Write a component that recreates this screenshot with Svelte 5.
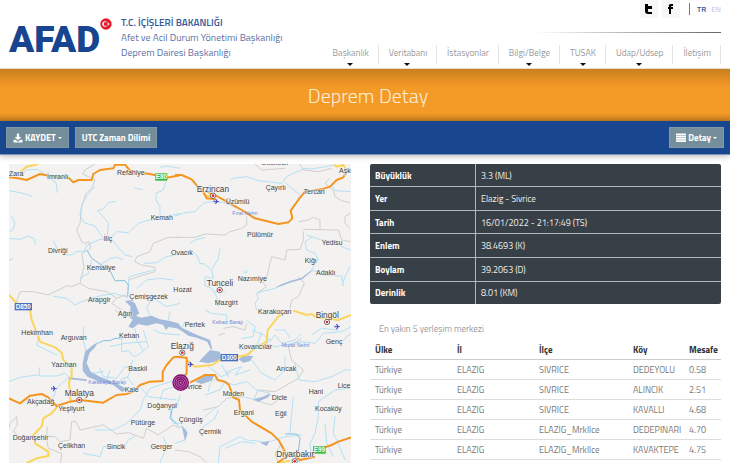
<script lang="ts">
	interface NavItem {
		label: string;
		menu: boolean;
	}

	const nav: NavItem[] = [
		{ label: 'Başkanlık', menu: true },
		{ label: 'Veritabanı', menu: true },
		{ label: 'İstasyonlar', menu: false },
		{ label: 'Bilgi/Belge', menu: true },
		{ label: 'TUSAK', menu: true },
		{ label: 'Udap/Udsep', menu: true },
		{ label: 'İletişim', menu: false }
	];

	const details = [
		['Büyüklük', '3.3 (ML)'],
		['Yer', 'Elazig - Sivrice'],
		['Tarih', '16/01/2022 - 21:17:49 (TS)'],
		['Enlem', '38.4693 (K)'],
		['Boylam', '39.2063 (D)'],
		['Derinlik', '8.01 (KM)']
	];

	const places = [
		['Türkiye', 'ELAZIG', 'SIVRICE', 'DEDEYOLU', '0.58'],
		['Türkiye', 'ELAZIG', 'SIVRICE', 'ALINCIK', '2.51'],
		['Türkiye', 'ELAZIG', 'SIVRICE', 'KAVALLI', '4.68'],
		['Türkiye', 'ELAZIG', 'ELAZIG_MrkIlce', 'DEDEPINARI', '4.70'],
		['Türkiye', 'ELAZIG', 'ELAZIG_MrkIlce', 'KAVAKTEPE', '4.75']
	];

	// The map is drawn in tiles, each with its own origin
	const tiles = [
		{
			x: 0,
			y: 0,
			rivers:
				'M27 38L60 45 80 30 110 28 130 38 150 55 168 68 172 98M27 92L60 98 75 102 98 110M34 168L45 190 38 210 28 215M27 235L60 238 85 228 102 235 107 253M27 302L40 295M285 80L262 105 245 135 240 165 252 188 285 198 310 235 330 240M347 124L325 128 308 148 292 152 310 170 325 190 322 225 345 250 375 285 397 290M330 235L350 215 385 218 415 190 440 182 490 175 520 165 540 160M497 65L490 90 468 100 468 120 480 140 480 165M403 85L428 88M480 22L500 18 540 25M160 242L172 268 200 285 215 285 230 275 262 272M252 272L262 255 300 238 330 240M275 300L265 340 240 355M300 315L330 295 350 292 370 300M385 375L388 350 460 330M433 310L470 308 500 290 540 282M158 408L200 415 225 435 245 425 290 410 340 400 380 410M410 385L440 360 480 355 520 360M460 415L500 440 540 430',
			streams: 'M262 272L275 295 300 312 330 332 345 362 375 362 385 375 383 410',
			borders:
				'M285 12L255 30 248 42 265 50 285 60 275 85 258 100 245 140 240 190 230 210 245 245 255 250 268 245 272 265 245 280 252 320 240 370 215 380 200 377 180 388 145 405 100 395 60 395 50 425M240 370L265 385 320 395 350 415 375 405 382 415M540 232L505 232 490 238 460 250 450 275 410 290 405 305 425 315 465 322 465 335 430 345 385 360M350 415L335 430 365 450',
			yellow: 'M62 35L80 20 115 12M27 405L45 425 65 440 85 450',
			orange:
				'M27 52L55 55 80 60 120 42 150 48 208 55 220 67 235 60 275 60 280 42 300 30 340 25 345 14 375 14 390 32 420 38 450 42 500 53 540 46',
			lakes: ''
		},
		{
			x: 525,
			y: 0,
			rivers:
				'M0 168L30 158 60 155 85 130 105 125 150 128 200 150M165 60L175 55 215 50 250 62 320 70 335 50 355 40 390 25 410 27 480 15M330 68L375 105 352 150M470 75L480 92 527 95M45 250L60 240 90 232M45 268L65 285 75 310 88 312 110 330 130 295 135 265M110 330L115 355 90 350 90 378 110 385 125 410 130 440M202 335L215 338 215 328M245 450L240 430 250 415 245 400 260 395 300 385 330 370M410 330L420 310 430 300 420 280 395 270 390 245 410 232M395 225L440 240 480 245 500 260 527 270M410 330L450 345 500 348 505 378M500 375L515 340 525 320M120 395L150 393',
			streams: '',
			borders:
				'M375 12L385 30 430 35 470 25M465 55L450 70 475 90 480 110 500 122 525 128M525 205L510 190 510 170 525 160M0 232L60 232 90 222 150 225 165 215 200 205 215 195 215 170M370 185L400 180 415 172 435 180 435 210M385 215L385 240 375 268 335 270 330 300 290 290 285 310 275 350 265 370 275 380 245 400M385 208L490 210 500 240 527 245M370 350L388 370 370 410 350 420 345 445M240 12L260 30 330 25',
			yellow: 'M478 15L485 20 505 15 512 28M78 90L92 108 112 108',
			orange:
				'M0 45L20 45 50 58 70 82 85 95 95 115 120 118M95 95L125 108 150 122 200 150 240 175 310 192 340 187 352 175 347 152 370 120 390 95 440 88 465 80 485 60 505 52 512 40',
			lakes: 'M300 382L320 373 345 363 380 353 410 330 410 334 382 358 345 368 320 378Z'
		},
		{
			x: 0,
			y: 450,
			rivers:
				'M250 50L250 90 260 130M105 60L115 85 110 105 150 125 172 135M27 215L60 202 110 195 120 198 170 198 195 190 210 205M118 172L118 195M157 270L170 235 200 207M365 85L365 125 385 122 398 138 410 138 445 110 430 60M330 110L375 100 440 95M405 55L410 90 430 120M372 82L400 70M300 175L310 200 350 205 375 170 400 175M275 190L310 185M320 210L330 180M360 210L385 200 398 150M400 225L380 200M285 360L340 360 380 340 420 300 430 270 450 235 490 222 540 205M480 270L490 240 540 225M250 430L300 440 310 410 375 408 385 390 410 375M540 255L530 290 510 300 520 340 540 340M420 230L445 260 530 270M490 380L500 410 480 459M460 60L485 70 540 75',
			streams: 'M365 85L345 85 330 92 310 92 295 100M520 285L510 325 530 340',
			borders:
				'M27 355L30 340 50 320 52 345 40 362 62 390M142 350L140 378 165 380 180 395 210 390 215 335 228 335 240 360 310 345 350 372 385 368 430 385 440 355 475 375 520 345 540 355M140 390L145 415 185 430 182 459M345 0L370 20 378 5M62 390L100 380',
			yellow:
				'M90 0L95 30 115 80 120 95 165 112 185 128 190 150 215 172 215 200 207 215 212 275M172 290L155 310 130 325 125 350 97 378 105 400 145 425 145 438 110 445 80 459',
			orange:
				'M27 265L60 280 90 257 125 252 145 262 170 288 210 275 240 270 310 278 350 255 380 252 400 245 420 225 450 215 488 213 488 185 500 165 520 142 540 140',
			lakes:
				'M295 95L285 112 268 130 260 160 272 185 300 200 350 220 385 240 365 245 340 225 290 212 262 200 248 182 248 160 255 125 275 108ZM205 202L260 208 260 213 205 208Z'
		},
		{
			x: 525,
			y: 450,
			rivers:
				'M90 0L110 10 155 15 155 45M215 30L240 50 235 80 200 85M260 65L245 110 195 120M275 100L300 75 320 100 360 90 380 70M230 60L265 75 290 95M300 60L330 60 345 85M220 140L235 110 270 100 300 110 380 95 420 100 445 70 500 65M500 65L528 50M410 75L440 55 490 60M230 150L260 190 300 210 330 180 330 140M360 160L372 210 420 215 470 200 510 180 528 180M140 165L160 200 155 185 200 170 180 195 225 180M125 205L105 220 100 245M150 215L135 240 90 255M150 215L175 225 215 215 245 240 285 250M100 170L140 200 170 185M205 260L235 268 290 255M130 300L120 325 85 350 75 365M90 320L125 290M130 459L135 410 195 380 215 390 265 395M150 415L200 395 240 400M285 395L330 380 380 375M355 260L350 310 345 370M525 235L480 240 430 275 430 320 420 370 405 400 410 440M480 320L475 370 490 400 510 450M450 340L455 400 475 440M0 205L30 190M0 340L35 360 30 390 0 400M375 459L355 430',
			streams: 'M330 372L365 372 375 385 370 425 360 445',
			borders:
				'M380 85L340 110 350 150 385 180 370 205 300 245 250 240M85 300L130 290 155 265 205 260M145 55L175 50 210 60 215 40M528 70L505 90M0 420L40 425 75 440 95 459M250 240L235 270 290 285 320 260M310 459L300 430 320 400M130 75L150 70',
			yellow:
				'M35 150L60 170 110 165 135 150 215 135 240 115 275 95 278 60 310 20 330 8M355 2L395 15 410 12 425 22 490 30 528 15M310 459L345 452',
			orange:
				'M0 140L35 143 35 190 15 215M45 218L90 195 120 195 128 210 150 215 162 225 175 262 192 270 195 300 230 335 290 370 312 392 330 425M440 415L470 405 490 395 528 382M306 459L350 430 375 450 420 440',
			lakes:
				'M72 155L85 140 105 120 135 125 140 150 100 160ZM190 148L205 138 235 138 225 153 205 158ZM60 215L90 198 118 197 110 212 80 222ZM238 268L265 260 285 250 280 262 250 275ZM255 398L285 392 275 408ZM20 345L38 370 30 392 25 370Z'
		},
		{
			// Keban reservoir, which crosses the other tiles
			x: 330,
			y: 375,
			rivers: 'M120 92L110 70 122 45M175 106L180 80M215 130L225 110',
			streams: '',
			borders: '',
			yellow: '',
			orange: '',
			lakes:
				'M45 48L62 46 75 55 88 85 78 92 92 98 125 92 150 103 180 108 205 115 215 128 240 140 262 150 300 165 307 192 302 192 292 170 260 158 235 152 215 138 200 130 175 126 168 136 160 120 140 115 110 122 85 117 68 130 55 125 68 104 45 86 60 78 62 65Z'
		}
	];

	const towns: [string, number, number][] = [
		['Zara', 27, 48],
		['İmranlı', 141, 57],
		['Refahiye', 351, 46],
		['Kemah', 452, 179],
		['İliç', 311, 243],
		['Divriği', 144, 278],
		['Kemaliye', 260, 330],
		['Ovacık', 513, 286],
		['Arapgir', 264, 426],
		['Çemişgezek', 388, 418],
		['Hozat', 520, 397],
		['Otlukbeli', 783, 16],
		['Aşk', 1017, 38],
		['Çayırlı', 797, 90],
		['Tercan', 911, 101],
		['Üzümlü', 677, 131],
		['Pülümür', 741, 230],
		['Yedisu', 965, 254],
		['Kiğı', 914, 308],
		['Adaklı', 948, 344],
		['Nazımiye', 713, 364],
		['Mazgirt', 644, 436],
		['Ağın', 354, 469],
		['Hekimhan', 64, 524],
		['Arguvan', 182, 539],
		['Keban', 357, 535],
		['Yazıhan', 154, 621],
		['Baskil', 385, 632],
		['Kale', 374, 696],
		['Akçadağ', 81, 731],
		['Yeşilyurt', 175, 752],
		['Doğanyol', 442, 745],
		['Pütürge', 392, 796],
		['Doğanşehir', 38, 841],
		['Çelikhan', 174, 865],
		['Sincik', 320, 867],
		['Gerger', 452, 867],
		['Karakoçan', 774, 463],
		['Pertek', 554, 501],
		['Kovancılar', 717, 567],
		['Genç', 977, 553],
		['Arıcak', 829, 634],
		['Sivrice', 543, 687],
		['Lice', 1013, 683],
		['Hani', 926, 701],
		['Maden', 668, 709],
		['Dicle', 815, 719],
		['Kocaköy', 945, 754],
		['Ergani', 701, 764],
		['Eğil', 825, 767],
		['Çüngüş', 536, 787],
		['Çermik', 597, 822]
	];

	const cities: [string, number, number, number, number][] = [
		['Erzincan', 590, 96, 639, 107],
		['Tunceli', 620, 379, 659, 390],
		['Malatya', 194, 708, 238, 720],
		['Elazığ', 512, 566, 547, 578],
		['Bingöl', 947, 474, 981, 486],
		['Diyarbakır', 829, 892, 884, 904]
	];

	const waters: [string, number, number][] = [
		['Fırat Nehri', 697, 165],
		['Karakaya Barajı', 265, 671],
		['Keban Barajı', 637, 491],
		['Murat Nehri', 845, 561]
	];

	const shields: [string, number, number, number, string][] = [
		['E80', 466, 40, 36, '#38b838'],
		['D850', 44, 429, 52, '#4e6fc0'],
		['D300', 662, 582, 52, '#4e6fc0'],
		['E99', 939, 859, 38, '#38b838']
	];

	const airports = [
		[649, 124],
		[162, 686],
		[572, 613],
		[1012, 500]
	];
</script>

<header class="top">
	<a class="brand" href="#home">
		<span class="logo">
			AFAD
			<svg class="flag" viewBox="0 0 36 36" aria-hidden="true">
				<circle cx="18" cy="18" r="17" fill="#e51b2c" />
				<circle cx="15" cy="18" r="8" fill="#fff" />
				<circle cx="17" cy="18" r="6" fill="#e51b2c" />
				<path d="M20 18l4-1 2-4 1 4 4 1-4 1-1 4-2-4z" fill="#fff" />
			</svg>
		</span>
		<span class="ministry">
			<strong>T.C. İÇİŞLERİ BAKANLIĞI</strong>
			<span>Afet ve Acil Durum Yönetimi Başkanlığı</span>
			<span>Deprem Dairesi Başkanlığı</span>
		</span>
	</a>

	<div class="side">
		<div class="tools">
			<a class="social" href="#twitter" aria-label="Twitter">
				<svg viewBox="0 0 18 18">
					<path d="M5 4h3v2h4v3H8v2q0 1 1 1h3v2H8q-3 0-3-3z" />
				</svg>
			</a>
			<a class="social" href="#facebook" aria-label="Facebook">
				<svg viewBox="0 0 18 18">
					<path d="M7 14V9H6V7h1q-1-3 2-3h2v2h-1q-1 0-1 1h2v2H9v5z" />
				</svg>
			</a>
			<div class="langs">
				<a class="active" href="#tr">TR</a>
				<a href="#en">EN</a>
			</div>
		</div>
		<div class="rule"></div>
		<nav>
			{#each nav as item}
				<a href="#{item.label}" class:menu={item.menu}>{item.label}</a>
			{/each}
		</nav>
	</div>
</header>

<div class="banner"><h1>Deprem Detay</h1></div>

<div class="toolbar">
	<button type="button">
		<svg class="icon" viewBox="0 0 18 18" aria-hidden="true">
			<path d="M7 1h4v6h4l-6 6-6-6h4zM1 12h4l4 4 4-4h4v5H1z" />
		</svg>
		KAYDET <i class="caret"></i>
	</button>
	<button type="button">UTC Zaman Dilimi</button>
	<button type="button" class="right">
		<svg class="icon" viewBox="0 0 18 18" aria-hidden="true">
			<path d="M0 1h18v3H0zM0 5h18v3H0zM0 9h18v3H0zM0 13h18v3H0z" />
		</svg>
		Detay <i class="caret"></i>
	</button>
</div>

<main>
	<svg class="map" viewBox="27 12 1026 897" role="img" aria-label="Elazığ">
		<rect x="27" y="12" width="1026" height="897" fill="#f3f2f0" />
		{#each tiles as tile}
			<g transform="translate({tile.x} {tile.y})">
				<path class="border" d={tile.borders} />
				<path class="river" d={tile.rivers} />
				<path class="stream" d={tile.streams} />
				<path class="lake" d={tile.lakes} />
			</g>
		{/each}
		{#each tiles as tile}
			<g transform="translate({tile.x} {tile.y})">
				<path class="road yellow" d={tile.yellow} />
				<path class="road orange" d={tile.orange} />
			</g>
		{/each}

		{#each shields as [name, x, y, width, color]}
			<rect {x} {y} {width} height="22" fill={color} />
			<text class="shield" x={x + width / 2} y={y + 18}>{name}</text>
		{/each}
		{#each airports as [x, y]}
			<path class="plane" transform="translate({x} {y})" d="M-8-4l3 3h4l-3-7h3l5 7h4v2H4l-5 7h-3l3-7h-4l-3 3z" />
		{/each}
		{#each waters as [name, x, y]}
			<text class="water" {x} {y}>{name}</text>
		{/each}
		{#each towns as [name, x, y]}
			<text class="town" {x} {y}>{name}</text>
		{/each}
		{#each cities as [name, x, y, cx, cy]}
			<text class="city" {x} {y}>{name}</text>
			<circle {cx} {cy} r="8" fill="#fff" stroke="#333" stroke-width="2" />
			<circle {cx} {cy} r="4" fill="#e8222c" />
		{/each}

		<!-- epicentre -->
		<g class="epicentre">
			<circle cx="542" cy="668" r="23" />
			<circle cx="542" cy="668" r="17" />
			<circle cx="542" cy="668" r="11" />
			<circle cx="542" cy="668" r="5" />
		</g>
	</svg>

	<section>
		<table class="details">
			<tbody>
				{#each details as [name, value]}
					<tr>
						<th scope="row">{name}</th>
						<td>{value}</td>
					</tr>
				{/each}
			</tbody>
		</table>

		<table class="places">
			<caption>En yakın 5 yerleşim merkezi</caption>
			<thead>
				<tr>
					<th class="wide">Ülke</th>
					<th class="wide">İl</th>
					<th class="district">İlçe</th>
					<th class="village">Köy</th>
					<th>Mesafe</th>
				</tr>
			</thead>
			<tbody>
				{#each places as row}
					<tr>
						{#each row as cell}
							<td>{cell}</td>
						{/each}
					</tr>
				{/each}
			</tbody>
		</table>
	</section>
</main>

<style>
	:global(body) {
		margin: 0;
		background: #fff;
		font-family: 'Titillium Web', Roboto, sans-serif;
		font-size: 9px;
		overflow-x: hidden;
	}

	a {
		color: inherit;
		text-decoration: none;
	}

	.top {
		display: flex;
		justify-content: space-between;
		height: 68px;
		padding: 0 9px;
		border-bottom: 1px solid #e4dcd4;
	}

	.brand {
		display: flex;
		gap: 9px;
		padding-top: 15px;
		color: #5d71a6;
	}

	.logo {
		position: relative;
		width: 103px;
		padding-top: 3px;
		color: #18458f;
		font-family: Roboto, sans-serif;
		font-size: 37px;
		font-weight: 900;
		line-height: 44px;
	}

	.flag {
		position: absolute;
		top: 3px;
		right: 0;
		width: 12px;
		height: 12px;
	}

	.ministry {
		display: flex;
		flex-direction: column;
		font-size: 10px;
		line-height: 15px;
		white-space: nowrap;
	}

	.ministry strong {
		color: #35599b;
		font-weight: 600;
	}

	.side {
		display: flex;
		flex-direction: column;
		align-items: flex-end;
	}

	.tools {
		display: flex;
		gap: 4px;
		height: 18px;
	}

	.social {
		width: 18px;
		height: 18px;
		background: #f7f7f7;
	}

	.social svg {
		display: block;
		width: 18px;
	}

	.langs {
		display: flex;
		gap: 5px;
		align-self: center;
		margin-left: 5px;
		padding-left: 7px;
		border-left: 1px solid #777;
		font-size: 8px;
		line-height: 12px;
		color: #b9bfdb;
	}

	.langs .active {
		color: #35599b;
		font-weight: 600;
	}

	.rule {
		width: 186px;
		height: 1px;
		margin: 14px 0 12px;
		background: linear-gradient(to right, #fff, #666);
	}

	nav {
		display: flex;
		color: #999;
		line-height: 16px;
	}

	nav a {
		position: relative;
		height: 19px;
		padding: 0 9px 0 10px;
		border-right: 1px solid #e4e4e4;
	}

	nav .menu::after {
		content: '';
		position: absolute;
		left: 50%;
		bottom: -2px;
		margin-left: -3px;
		border: 3px solid transparent;
		border-top-color: #111;
		border-bottom: 0;
	}

	.banner {
		padding: 14px 0 12px 6px;
		background: linear-gradient(#c8801f, #ed9425 14px, #f39a27 20px, #f39a27 44px, #c8801f);
		text-align: center;
	}

	h1 {
		margin: 0;
		color: #fdebd3;
		font-size: 20px;
		font-weight: 300;
		line-height: 26px;
	}

	.toolbar {
		display: flex;
		gap: 6px;
		padding: 6px;
		background: #18468f;
		border-bottom: 1px solid #7d93bd;
		box-shadow: 0 1px 6px rgba(0, 0, 0, 0.3);
	}

	button {
		display: flex;
		align-items: center;
		gap: 2px;
		height: 21px;
		padding: 0 6px;
		border: 1px solid #8199a6;
		background: #758e9b;
		color: #fff;
		font: inherit;
		font-weight: 700;
	}

	.right {
		margin-left: auto;
	}

	.icon {
		width: 10px;
		height: 10px;
		fill: #fff;
	}

	.caret {
		border: 2px solid transparent;
		border-top-color: #fff;
		border-bottom: 0;
	}

	main {
		display: grid;
		grid-template-columns: 342fr 351fr;
		gap: 19px;
		align-items: start;
		padding: 9px 9px 0;
	}

	.map {
		display: block;
		width: 100%;
		font-family: 'Liberation Sans', Arial, sans-serif;
	}

	.map path {
		fill: none;
		stroke-linejoin: round;
	}

	.map .river {
		stroke: #b3e0f6;
		stroke-width: 3;
	}

	.map .stream {
		stroke: #7fbfe2;
		stroke-width: 3;
	}

	.map .border {
		stroke: #cfcfcf;
		stroke-width: 3;
	}

	.map .lake {
		fill: #a5bbdc;
	}

	.map .yellow {
		stroke: #fbd45a;
		stroke-width: 6;
	}

	.map .orange {
		stroke: #f5941f;
		stroke-width: 6;
	}

	.map .plane {
		fill: #4343c8;
	}

	.town,
	.city {
		fill: #444;
		stroke: #f3f2f0;
		stroke-width: 3;
		paint-order: stroke;
		font-size: 21px;
	}

	.city {
		font-size: 25px;
	}

	.water {
		fill: #7288d8;
		font-size: 16px;
	}

	.shield {
		fill: #fff;
		font-size: 19px;
		font-weight: 700;
		text-anchor: middle;
	}

	.epicentre {
		fill: #c87fbd;
		stroke: #850d6c;
		stroke-width: 4;
	}

	table {
		width: 100%;
		border-collapse: collapse;
		table-layout: fixed;
		text-align: left;
	}

	th,
	td {
		padding: 0 5px;
		white-space: nowrap;
	}

	.details {
		height: 140px;
		border-radius: 2px;
		background: #384047;
		color: #eee;
		overflow: hidden;
	}

	.details th {
		width: 95px;
		border-right: 1px solid #b4b7ba;
		color: #fff;
	}

	.details tr + tr {
		border-top: 1px solid #b4b7ba;
	}

	.places {
		margin-top: 18px;
		color: #777;
	}

	caption {
		padding: 0 9px 4px;
		color: #999;
		line-height: 14px;
		text-align: left;
	}

	.places th {
		height: 19px;
		border-bottom: 1px solid #ccc;
		color: #333;
	}

	.places td {
		height: 19px;
		border-bottom: 1px solid #ddd;
	}

	.wide {
		width: 72px;
	}

	.district {
		width: 84px;
	}

	.village {
		width: 46px;
	}
</style>
